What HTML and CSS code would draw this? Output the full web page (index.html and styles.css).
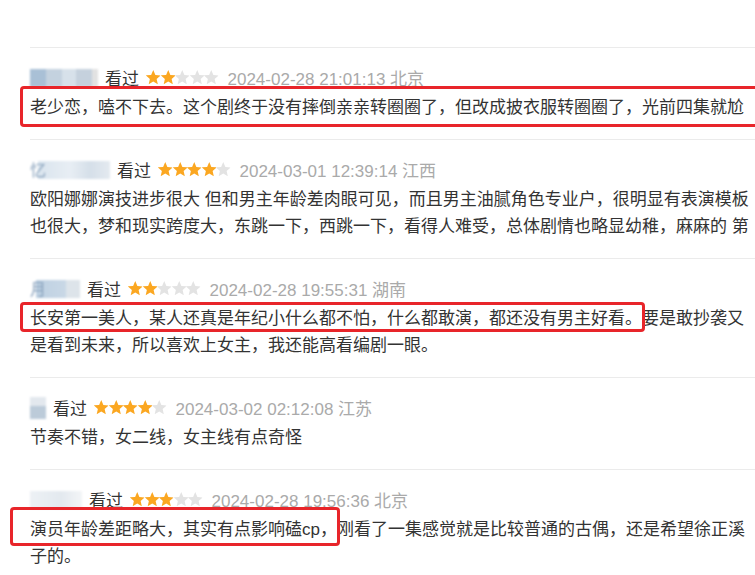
FILE: index.html
```html
<!DOCTYPE html>
<html lang="zh-CN">
<head>
  <meta charset="UTF-8">
  <title>短评</title>
  <link rel="stylesheet" href="styles.css">
</head>
<body>
  <svg class="defs" width="0" height="0">
    <symbol id="star" viewBox="1.5 1.5 21 21">
      <path d="M12 1.5l3.1 7.1 7.6.7-5.8 5.1 1.7 7.6L12 18l-6.6 4 1.7-7.6-5.8-5.1 7.6-.7z"/>
    </symbol>
  </svg>

  <div class="comments">
    <div class="comment">
      <div class="meta">
        <span class="user user-1"></span>
        <span class="watched">看过</span>
        <span class="stars">
          <svg class="star on"><use href="#star"/></svg><svg class="star on"><use href="#star"/></svg><svg class="star"><use href="#star"/></svg><svg class="star"><use href="#star"/></svg><svg class="star"><use href="#star"/></svg>
        </span>
        <span class="time">2024-02-28 21:01:13 北京</span>
      </div>
      <p class="text"><span class="mark mark-1">老少恋，嗑不下去。这个剧终于没有摔倒亲亲转圈圈了，但改成披衣服转圈圈了，光前四集就尬</span></p>
    </div>

    <div class="comment">
      <div class="meta">
        <span class="user user-2"><i>忆</i></span>
        <span class="watched">看过</span>
        <span class="stars">
          <svg class="star on"><use href="#star"/></svg><svg class="star on"><use href="#star"/></svg><svg class="star on"><use href="#star"/></svg><svg class="star on"><use href="#star"/></svg><svg class="star"><use href="#star"/></svg>
        </span>
        <span class="time">2024-03-01 12:39:14 江西</span>
      </div>
      <p class="text">欧阳娜娜演技进步很大 但和男主年龄差肉眼可见，而且男主油腻角色专业户，很明显有表演模板<br>也很大，梦和现实跨度大，东跳一下，西跳一下，看得人难受，总体剧情也略显幼稚，麻麻的 第</p>
    </div>

    <div class="comment">
      <div class="meta">
        <span class="user user-3"><i>月</i></span>
        <span class="watched">看过</span>
        <span class="stars">
          <svg class="star on"><use href="#star"/></svg><svg class="star on"><use href="#star"/></svg><svg class="star"><use href="#star"/></svg><svg class="star"><use href="#star"/></svg><svg class="star"><use href="#star"/></svg>
        </span>
        <span class="time">2024-02-28 19:55:31 湖南</span>
      </div>
      <p class="text"><span class="mark mark-3">长安第一美人，某人还真是年纪小什么都不怕，什么都敢演，都还没有男主好看。</span>要是敢抄袭又<br>是看到未来，所以喜欢上女主，我还能高看编剧一眼。</p>
    </div>

    <div class="comment">
      <div class="meta">
        <span class="user user-4"></span>
        <span class="watched">看过</span>
        <span class="stars">
          <svg class="star on"><use href="#star"/></svg><svg class="star on"><use href="#star"/></svg><svg class="star on"><use href="#star"/></svg><svg class="star on"><use href="#star"/></svg><svg class="star"><use href="#star"/></svg>
        </span>
        <span class="time">2024-03-02 02:12:08 江苏</span>
      </div>
      <p class="text">节奏不错，女二线，女主线有点奇怪</p>
    </div>

    <div class="comment">
      <div class="meta">
        <span class="user user-5"></span>
        <span class="watched">看过</span>
        <span class="stars">
          <svg class="star on"><use href="#star"/></svg><svg class="star on"><use href="#star"/></svg><svg class="star on"><use href="#star"/></svg><svg class="star"><use href="#star"/></svg><svg class="star"><use href="#star"/></svg>
        </span>
        <span class="time">2024-02-28 19:56:36 北京</span>
      </div>
      <p class="text"><span class="mark mark-5">演员年龄差距略大，其实有点影响磕cp，</span>刚看了一集感觉就是比较普通的古偶，还是希望徐正溪<br>子的。</p>
    </div>
  </div>
</body>
</html>
```

FILE: styles.css
```css
body {
  margin: 0;
  background: #fff;
  color: #333;
  font-family: "Liberation Sans", "Noto Sans CJK SC", sans-serif;
  font-size: 17px;
  overflow: hidden;
}
.defs {
  position: absolute;
}
.comments {
  padding: 47px 0 0 30px;
}
.comment {
  border-top: 1px solid #ebebeb;
  padding: 18px 0 18px;
}
.meta {
  display: flex;
  align-items: center;
  gap: 7px;
  height: 23px;
  margin-bottom: 5px;
  white-space: nowrap;
}
.watched {
  color: #333;
}
.stars {
  display: flex;
}
.star {
  width: 14.5px;
  height: 14.5px;
  fill: #e3e3e3;
}
.star.on {
  fill: #fba721;
}
.time {
  color: #aaa;
  margin-left: 2px;
}
.text {
  margin: 0;
  line-height: 27px;
  white-space: nowrap;
}

/* blurred user names */
.user {
  display: inline-block;
  height: 18px;
  filter: blur(1px);
  color: #8aa3bd;
}
.user i {
  font-style: normal;
  font-size: 16px;
  line-height: 18px;
}
.user-1 {
  width: 68px;
  background: linear-gradient(90deg, #a9c0d6 0, #a9c0d6 16px, #c4d2df 16px, #c4d2df 32px, #d7e1ea 32px, #d7e1ea 46px, #c5d1dd 46px, #c5d1dd 62px, #e2e2e2 62px);
}
.user-2 {
  width: 80px;
  background: linear-gradient(90deg, #fff 0, #fff 8px, #d9e4ee 8px, #e8eef4 40px, #d5dfe9 60px, #e4eaf0 80px);
}
.user-3 {
  width: 50px;
  background: linear-gradient(90deg, #fff 0, #fff 6px, #bdd0e2 6px, #c9d8e6 36px, #dde4ea 36px);
}
.user-4 {
  width: 16px;
  height: 22px;
  background: linear-gradient(180deg, #e3e8ee 0, #e3e8ee 9px, #bccbd9 9px);
}
.user-5 {
  width: 52px;
  background: linear-gradient(90deg, #edf1f5, #e3e9ef 60%, #f3f5f7);
}

/* red annotation boxes */
.mark {
  position: relative;
}
.mark::after {
  content: "";
  position: absolute;
  border: 3px solid #e8252a;
  border-radius: 4px;
  pointer-events: none;
}
.mark-1::after {
  top: -12px;
  bottom: -10px;
  left: -10px;
  right: -80px;
}
.mark-3::after {
  top: -7px;
  bottom: -4px;
  left: -10px;
  right: -3px;
}
.mark-5::after {
  top: -13px;
  bottom: -7px;
  left: -20px;
  right: -3px;
}
```
